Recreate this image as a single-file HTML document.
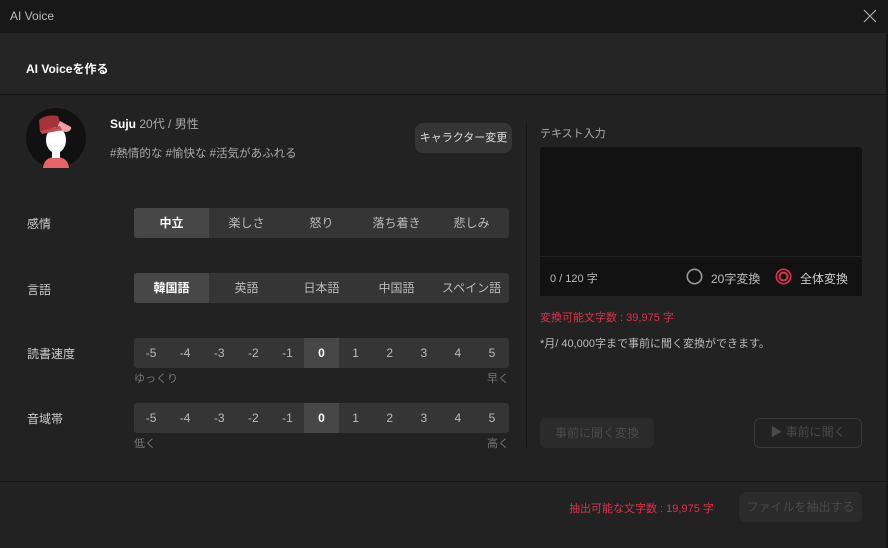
<!DOCTYPE html><html><head><meta charset="utf-8"><style>
*{box-sizing:border-box;margin:0;padding:0}
body{width:888px;height:548px;background:#222;font-family:"Liberation Sans","Noto Sans CJK JP",sans-serif;color:#ccc;position:relative;overflow:hidden;font-size:12px}
.a{position:absolute}
.seg{position:absolute;left:134px;width:375px;height:30px;background:#353535;border-radius:3px;display:flex;overflow:hidden}
.seg div{flex:1;text-align:center;line-height:30px;color:#bbb;font-size:12px}
.seg div.on{background:#474747;color:#fff;font-weight:bold}
.lab{position:absolute;left:27px;font-size:12px;color:#ccc}
.small{position:absolute;font-size:11px;color:#777}
</style></head><body>
<div class="a" style="left:0;top:0;width:888px;height:33px;background:#181818"></div>
<div class="a" style="left:10px;top:9px;font-size:12px;color:#bbb">AI Voice</div>
<svg class="a" style="left:863px;top:9px" width="14" height="14"><path d="M1 1L13 13M13 1L1 13" stroke="#aaa" stroke-width="1.2"/></svg>
<div class="a" style="left:0;top:33px;width:888px;height:62px;background:#252525;border-bottom:1px solid #151515"></div>
<div class="a" style="left:26px;top:60px;font-size:12px;font-weight:bold;color:#fff">AI Voiceを作る</div>
<div class="a" style="left:886px;top:33px;width:2px;height:515px;background:#161616"></div>
<svg class="a" style="left:26px;top:108px" width="60" height="60" viewBox="0 0 60 60"><circle cx="30" cy="30" r="30" fill="#111"/><path d="M17 60Q18 49 30 49Q42 49 43 60Z" fill="#e8636a"/><rect x="26" y="40" width="8" height="10" fill="#fff"/><ellipse cx="30" cy="32" rx="10" ry="13" fill="#fff"/><path d="M14 24L13 12Q20 6 32 8L35 17Z" fill="#a8323a"/><path d="M34 13L45 19Q46 23 40 24L30 22Z" fill="#e8a0a0"/><path d="M16 26L14 23L34 18L36 22Z" fill="#c04a52"/></svg>
<div class="a" style="left:110px;top:115px;font-size:12px"><b style="color:#fff">Suju</b> <span style="color:#aaa">20代 / 男性</span></div>
<div class="a" style="left:110px;top:145px;font-size:11.5px;color:#aaa">#熱情的な #愉快な #活気があふれる</div>
<div class="a" style="left:415px;top:123px;width:97px;height:30px;background:#353535;border-radius:8px;text-align:center;line-height:30px;font-size:11px;color:#ddd">キャラクター変更</div>
<div class="lab" style="top:215px">感情</div>
<div class="seg" style="top:208px"><div class="on">中立</div><div>楽しさ</div><div>怒り</div><div>落ち着き</div><div>悲しみ</div></div>
<div class="lab" style="top:281px">言語</div>
<div class="seg" style="top:273px"><div class="on">韓国語</div><div>英語</div><div>日本語</div><div>中国語</div><div>スペイン語</div></div>
<div class="lab" style="top:345px">読書速度</div>
<div class="seg" style="top:338px"><div>-5</div><div>-4</div><div>-3</div><div>-2</div><div>-1</div><div class="on">0</div><div>1</div><div>2</div><div>3</div><div>4</div><div>5</div></div>
<div class="small" style="left:134px;top:370px">ゆっくり</div><div class="small" style="left:487px;top:370px">早く</div>
<div class="lab" style="top:410px">音域帯</div>
<div class="seg" style="top:403px"><div>-5</div><div>-4</div><div>-3</div><div>-2</div><div>-1</div><div class="on">0</div><div>1</div><div>2</div><div>3</div><div>4</div><div>5</div></div>
<div class="small" style="left:134px;top:435px">低く</div><div class="small" style="left:487px;top:435px">高く</div>
<div class="a" style="left:526px;top:123px;width:1px;height:324px;background:#151515"></div>
<div class="a" style="left:540px;top:125px;font-size:11px;color:#aaa">テキスト入力</div>
<div class="a" style="left:540px;top:147px;width:322px;height:109px;background:#121212;border-radius:3px 3px 0 0"></div>
<div class="a" style="left:540px;top:257px;width:322px;height:39px;background:#121212"></div>
<div class="a" style="left:550px;top:270px;font-size:11px;color:#bbb">0 / 120 字</div>
<svg class="a" style="left:686px;top:268px" width="17" height="17"><circle cx="8.5" cy="8.5" r="7.2" fill="none" stroke="#999" stroke-width="1.6"/></svg>
<div class="a" style="left:711px;top:270px;font-size:12px;color:#bbb">20字変換</div>
<svg class="a" style="left:775px;top:268px" width="17" height="17"><circle cx="8.5" cy="8.5" r="7.2" fill="none" stroke="#e0304a" stroke-width="1.6"/><circle cx="8.5" cy="8.5" r="4" fill="none" stroke="#e0304a" stroke-width="2"/></svg>
<div class="a" style="left:800px;top:270px;font-size:12px;color:#ccc">全体変換</div>
<div class="a" style="left:540px;top:309px;font-size:11px;color:#e0304a">変換可能文字数 : 39,975 字</div>
<div class="a" style="left:540px;top:335px;font-size:11px;color:#bbb">*月/ 40,000字まで事前に聞く変換ができます。</div>
<div class="a" style="left:540px;top:418px;width:114px;height:30px;background:#2b2b2b;border-radius:6px;text-align:center;line-height:30px;color:#4a4a4a">事前に聞く変換</div>
<div class="a" style="left:754px;top:418px;width:108px;height:30px;border:1.5px solid #3a3a3a;border-radius:6px;text-align:center;line-height:27px;color:#4a4a4a">▶ 事前に聞く</div>
<div class="a" style="left:0;top:481px;width:886px;height:1px;background:#151515"></div>
<div class="a" style="left:569px;top:500px;font-size:11px;color:#e0304a">抽出可能な文字数 : 19,975 字</div>
<div class="a" style="left:739px;top:492px;width:123px;height:30px;background:#2b2b2b;border-radius:6px;text-align:center;line-height:30px;color:#4a4a4a">ファイルを抽出する</div>
</body></html>
